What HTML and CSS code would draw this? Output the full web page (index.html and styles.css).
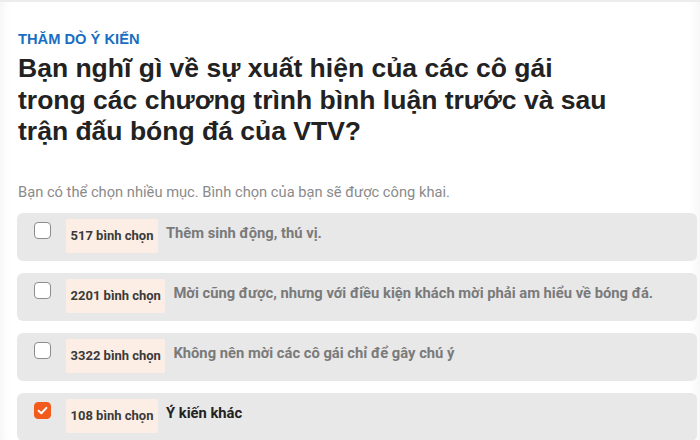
FILE: index.html
```html
<!DOCTYPE html>
<html lang="vi">
<head>
<meta charset="utf-8">
<link rel="stylesheet" href="styles.css">
</head>
<body>
<div class="card">
  <div class="label">THĂM DÒ Ý KIẾN</div>
  <h1 class="title">Bạn nghĩ gì về sự xuất hiện của các cô gái trong các chương trình bình luận trước và sau trận đấu bóng đá của VTV?</h1>
  <p class="hint">Bạn có thể chọn nhiều mục. Bình chọn của bạn sẽ được công khai.</p>
  <div class="options">
    <div class="option">
      <span class="box"></span>
      <span class="count">517 bình chọn</span>
      <span class="text">Thêm sinh động, thú vị.</span>
    </div>
    <div class="option">
      <span class="box"></span>
      <span class="count">2201 bình chọn</span>
      <span class="text">Mời cũng được, nhưng với điều kiện khách mời phải am hiểu về bóng đá.</span>
    </div>
    <div class="option">
      <span class="box"></span>
      <span class="count">3322 bình chọn</span>
      <span class="text">Không nên mời các cô gái chỉ để gây chú ý</span>
    </div>
    <div class="option">
      <span class="box checked"><svg viewBox="0 0 17 17" width="17" height="17"><path d="M4.6 8.8 L7.3 11.3 L12.4 5.9" fill="none" stroke="#fff" stroke-width="2" stroke-linecap="round" stroke-linejoin="round"/></svg></span>
      <span class="count">108 bình chọn</span>
      <span class="text selected">Ý kiến khác</span>
    </div>
  </div>
</div>
</body>
</html>
```
FILE: styles.css
```css
html, body {
  margin: 0;
  padding: 0;
  background: #ffffff;
}
.card {
  height: 440px;
  box-sizing: border-box;
  border-top: 2px solid #ececec;
  padding: 28px 3px 0 17px;
  box-shadow: inset 10px 0 12px -8px rgba(0,0,0,0.05), inset -10px 0 12px -8px rgba(0,0,0,0.05);
  overflow: hidden;
}
.label {
  font-family: "Liberation Sans", Arial, sans-serif;
  font-weight: bold;
  font-size: 14.7px;
  line-height: 18px;
  color: #1a6ec2;
  padding-left: 1px;
}
.title {
  margin: 5px 0 0 1px;
  width: 592px;
  font-family: "Liberation Sans", Arial, sans-serif;
  font-weight: bold;
  font-size: 26.5px;
  line-height: 31.5px;
  color: #222222;
}
.hint {
  margin: 35px 0 0 1px;
  font-family: Roboto, "Noto Sans", sans-serif;
  font-size: 14.7px;
  line-height: 18px;
  color: #8a8a8a;
}
.options {
  margin-top: 12px;
  display: flex;
  flex-direction: column;
  gap: 12px;
}
.option {
  display: flex;
  align-items: flex-start;
  background: #e8e8e8;
  border-radius: 6px;
  padding: 6px 10px 8px 17px;
}
.box {
  flex: none;
  width: 17px;
  height: 17px;
  box-sizing: border-box;
  margin-top: 3px;
  margin-right: 15px;
  border: 1px solid #8c8c8c;
  border-radius: 4px;
  background: #ffffff;
  display: flex;
}
.box.checked {
  border-color: #f35b1c;
  background: #f35b1c;
}
.box svg {
  margin: -1px;
}
.count {
  flex: none;
  height: 34px;
  line-height: 34px;
  padding: 0 4.5px;
  background: #fdeee5;
  border-radius: 2px;
  font-family: Roboto, "Noto Sans", sans-serif;
  font-weight: bold;
  font-size: 13px;
  color: #3a3a3a;
}
.text {
  margin: 4px 0 0 8px;
  font-family: Roboto, "Noto Sans", sans-serif;
  font-weight: bold;
  font-size: 14.75px;
  line-height: 20px;
  color: #7a7a7a;
}
.text.selected {
  color: #222222;
}
```
